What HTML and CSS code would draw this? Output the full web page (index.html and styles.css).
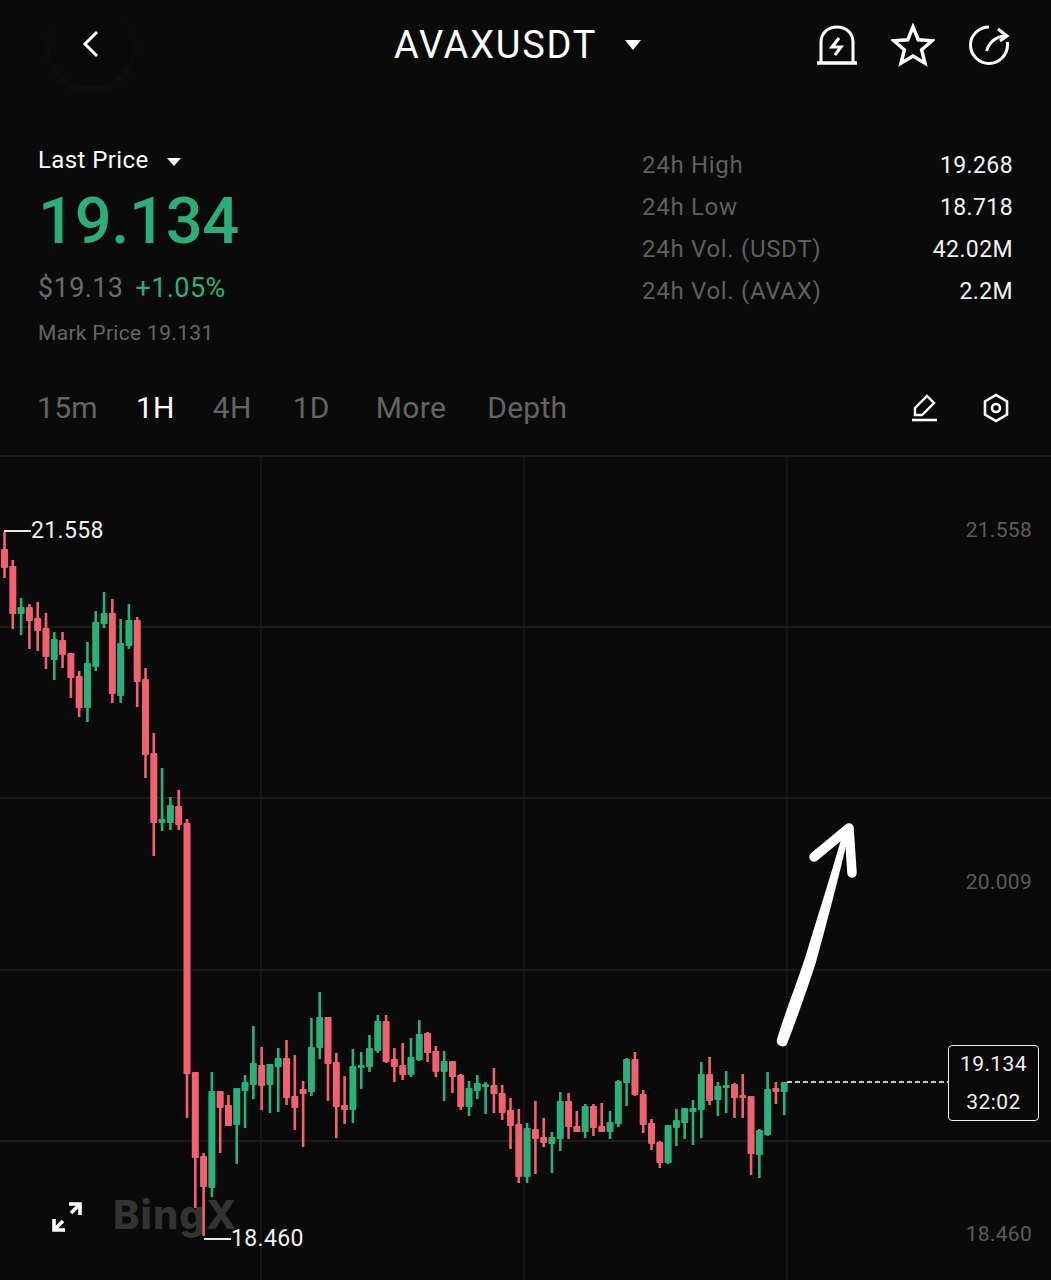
FILE: index.html
```html
<!DOCTYPE html>
<html lang="en">
<head>
  <meta charset="UTF-8" />
  <meta name="viewport" content="width=device-width, initial-scale=1.0"/>
  <title>AVAXUSDT</title>
  <link rel="stylesheet" href="styles.css">
</head>
<body>

<header class="top-bar">
  <div class="back-cell">
    <button class="back-btn" aria-label="Back">
      <svg width="20" height="28" viewBox="0 0 20 28"><path d="M16 2 L4 14 L16 26" class="line" stroke-width="3"/></svg>
    </button>
  </div>
  <div class="pair">
    <span class="pair-name">AVAXUSDT</span>
    <span class="caret caret-big"></span>
  </div>
  <div class="top-icons">
    <!-- alert -->
    <svg width="42" height="42" viewBox="0 0 42 42">
      <path d="M5 38 V18 C5 9 12 3 21 3 C30 3 37 9 37 18 V38" class="line" stroke-width="3"/>
      <path d="M1 39 H41" class="line" stroke-width="3.4"/>
      <path d="M23 14 L16 23 H25 L19 31" class="line" stroke-width="3"/>
    </svg>
    <!-- favourite -->
    <svg width="44" height="44" viewBox="0 0 46 46">
      <path d="M23 4 L28.5 17.5 L43 18.5 L32 28 L35.5 42 L23 34.500 L10.5 42 L14 28 L3 18.5 L17.500 17.500 Z" class="line" stroke-width="3.6"/>
    </svg>
    <!-- share -->
    <svg width="42" height="42" viewBox="0 0 42 42">
      <path d="M21 3 C11 3 2.500 11 2.500 21 C2.500 31 11 39.500 21 39.500 C31 39.500 39.500 31 39.500 21 V18" class="line" stroke-width="3"/>
      <path d="M18.500 27 C21 19 27 13 37 12" class="line" stroke-width="3"/>
      <path d="M30 5 L39 12 L32 17" class="line" stroke-width="3"/>
    </svg>
  </div>
</header>

<section class="summary">
  <div class="price-col">
    <div class="price-type">Last Price <span class="caret"></span></div>
    <div class="last-price">19.134</div>
    <div class="price-sub"><span class="usd">$19.13</span> <span class="pct">+1.05%</span></div>
    <div class="mark-price">Mark Price 19.131</div>
  </div>
  <div class="stats">
    <div class="stat"><span>24h High</span><b>19.268</b></div>
    <div class="stat"><span>24h Low</span><b>18.718</b></div>
    <div class="stat"><span>24h Vol. (USDT)</span><b>42.02M</b></div>
    <div class="stat"><span>24h Vol. (AVAX)</span><b>2.2M</b></div>
  </div>
</section>

<nav class="tabs">
  <a>15m</a>
  <a class="active">1H</a>
  <a>4H</a>
  <a class="tab-1d">1D</a>
  <a class="tab-more">More</a>
  <a>Depth</a>
  <div class="tab-icons">
    <svg width="28" height="30" viewBox="0 0 28 30">
      <path d="M4 22 V15 L16 3 L23 10 L11 22 Z" class="line" stroke-width="2.400"/>
      <path d="M1 27 H26" class="line" stroke-width="2.600"/>
    </svg>
    <svg width="26" height="30" viewBox="0 0 26 30">
      <path d="M13 2 L24 8.500 V21.500 L13 28 L2 21.500 V8.500 Z" class="line" stroke-width="2.600"/>
      <circle cx="13" cy="15" r="4" class="line" stroke-width="2.600"/>
    </svg>
  </div>
</nav>

<main class="chart">
  <div class="watermark">BingX</div>
  <svg id="candles" class="chart-svg" width="1051" height="824" viewBox="0 456 1051 824"></svg>

  <svg class="expand" width="32" height="32" viewBox="0 0 32 32">
    <path d="M3 29 L12 20 M3 18 V29 H14 M29 3 L20 12 M18 3 H29 V14" class="line" stroke-width="3.600"/>
  </svg>

  <div class="hl-label hl-high">21.558</div>
  <div class="hl-label hl-low">18.460</div>

  <div class="axis-label axis-1">21.558</div>
  <div class="axis-label axis-2">20.009</div>
  <div class="axis-label axis-3">18.460</div>

  <div class="now-line"></div>
  <div class="now-box">
    <span>19.134</span>
    <span>32:02</span>
  </div>
</main>

<script src="chart.js"></script>
</body>
</html>
```

FILE: styles.css
```css
body {
  margin: 0;
  width: 1051px;
  height: 1280px;
  overflow: hidden;
  font-family: 'Roboto', sans-serif;
  background: #0a0a0b;
  color: #fff;
}

.line {
  fill: none;
  stroke: #fff;
}

.caret {
  display: inline-block;
  width: 0;
  height: 0;
  margin-left: 12px;
  vertical-align: 2px;
  border-left: 7px solid transparent;
  border-right: 7px solid transparent;
  border-top: 8px solid #fff;
}

.caret-big {
  margin-left: 24px;
  vertical-align: 8px;
  border-left-width: 8px;
  border-right-width: 8px;
  border-top-width: 10px;
}

/* top bar */
.top-bar {
  display: grid;
  grid-template-columns: 394px auto 1fr;
  align-items: center;
  height: 90px;
}

.back-cell {
  padding-left: 49px;
}

.back-btn {
  display: flex;
  align-items: center;
  justify-content: center;
  width: 84px;
  height: 84px;
  padding: 0 0 2px;
  border: none;
  border-radius: 50%;
  background: #0a0a0b;
  box-shadow: 0 4px 14px rgba(255, 255, 255, 0.04);
}

.pair-name {
  font-size: 38px;
  letter-spacing: 1.8px;
}

.top-icons {
  display: flex;
  align-items: center;
  justify-content: flex-end;
  gap: 33px;
  padding-right: 41px;
}

/* price + stats */
.summary {
  display: flex;
  justify-content: space-between;
  height: 285px;
  padding: 54px 38px 0;
  box-sizing: border-box;
}

.price-type {
  font-size: 24px;
  line-height: 32px;
  letter-spacing: 0.4px;
}

.last-price {
  margin-top: 9px;
  font-size: 65px;
  line-height: 72px;
  font-weight: 500;
  letter-spacing: -0.3px;
  color: #2aaf7a;
}

.price-sub {
  margin-top: 14px;
  font-size: 27px;
  line-height: 34px;
  letter-spacing: 0.4px;
}

.usd {
  color: #6a6a6a;
  margin-right: 5px;
}

.pct {
  color: #2aaf7a;
}

.mark-price {
  margin-top: 14px;
  font-size: 21px;
  line-height: 28px;
  letter-spacing: 0.32px;
  color: #666;
}

.stats {
  width: 371px;
}

.stat {
  display: flex;
  justify-content: space-between;
  align-items: center;
  height: 42px;
  font-size: 24px;
  letter-spacing: 0.7px;
}

.stat span {
  color: #5f5f5f;
}

.stat b {
  font-size: 23px;
  letter-spacing: 0.4px;
  font-weight: 400;
  color: #f2f2f2;
}

/* interval tabs */
.tabs {
  display: flex;
  align-items: center;
  gap: 38px;
  height: 81px;
  padding: 0 42px 15px 37px;
  box-sizing: border-box;
  border-bottom: 1px solid #1a1a1b;
  font-size: 30px;
  letter-spacing: 0.3px;
  color: #646464;
}

.tabs .active {
  color: #fff;
}

.tab-1d {
  margin-left: 3px;
}

.tab-more {
  margin-left: 8px;
}

.tabs a:last-of-type {
  margin-left: 3px;
}

.tab-icons {
  display: flex;
  align-items: center;
  gap: 44px;
  margin-left: auto;
}

/* chart */
.chart {
  position: relative;
  height: 824px;
  overflow: hidden;
}

.chart-svg {
  position: relative;
  display: block;
}

.watermark {
  position: absolute;
  left: 113px;
  top: 735px;
  font-family: 'Inter', sans-serif;
  font-size: 40px;
  line-height: 48px;
  font-weight: 800;
  letter-spacing: 1px;
  color: #333;
}

.expand {
  position: absolute;
  left: 51px;
  top: 745px;
}

.hl-label {
  position: absolute;
  font-size: 23px;
  line-height: 30px;
  letter-spacing: 0.35px;
  color: #f0f0f0;
}

.hl-label::before {
  content: "";
  position: absolute;
  top: 14px;
  left: -27px;
  width: 27px;
  height: 1.5px;
  background: #e8e8e8;
}

.hl-high {
  left: 31px;
  top: 60px;
}

.hl-low {
  left: 231px;
  top: 768px;
}

.axis-label {
  position: absolute;
  right: 19px;
  font-size: 21px;
  line-height: 28px;
  letter-spacing: 0.3px;
  color: #5c5c5c;
}

.axis-1 { top: 60px; }
.axis-2 { top: 412px; }
.axis-3 { top: 764px; }

.now-line {
  position: absolute;
  left: 787px;
  top: 625px;
  width: 161px;
  height: 2px;
  background: repeating-linear-gradient(90deg, #c8c8c8 0 5px, transparent 5px 8px);
}

.now-box {
  position: absolute;
  left: 948px;
  top: 589px;
  display: flex;
  flex-direction: column;
  align-items: center;
  justify-content: center;
  gap: 10px;
  width: 91px;
  height: 76px;
  box-sizing: border-box;
  border: 1px solid #eee;
  border-radius: 4px;
  background: #0a0a0b;
  font-size: 21px;
  line-height: 28px;
  letter-spacing: 0.4px;
  color: #f0f0f0;
}
```

FILE: chart.js
```js
// [color, wickTop, bodyTop, bodyBottom, wickBottom] in page pixels
const candles = [
  ['r',532,549,568,578],['r',560,566,614,629],['g',598,607,614,635],['r',604,607,621,649],
  ['r',602,618,631,651],['r',613,628,657,669],['g',632,639,660,680],['r',632,640,655,668],
  ['r',653,653,678,698],['r',671,676,708,717],['g',642,663,708,722],['g',611,622,667,671],
  ['g',592,613,624,628],['r',599,613,694,703],['g',619,643,696,703],['g',604,620,646,649],
  ['r',617,620,682,707],['r',668,679,755,778],['r',733,753,823,856],['g',768,819,823,831],
  ['g',797,805,823,830],['r',790,806,825,830],['r',819,823,1074,1118],['r',1072,1072,1158,1208],
  ['r',1153,1156,1187,1236],['g',1072,1091,1188,1197],['r',1091,1091,1108,1153],['r',1095,1105,1126,1126],
  ['g',1088,1088,1125,1164],['g',1075,1082,1091,1128],['g',1026,1063,1085,1099],['r',1047,1065,1086,1110],
  ['g',1064,1064,1085,1113],['g',1048,1058,1067,1112],['r',1040,1058,1098,1105],['r',1055,1096,1108,1130],
  ['r',1081,1089,1094,1147],['g',1018,1047,1092,1096],['g',992,1017,1048,1059],['r',1017,1017,1064,1101],
  ['r',1053,1062,1107,1138],['r',1076,1105,1110,1124],['g',1049,1066,1110,1123],['g',1052,1065,1068,1089],
  ['g',1035,1048,1067,1072],['g',1015,1021,1051,1053],['r',1015,1021,1062,1063],['r',1048,1059,1067,1082],
  ['r',1043,1065,1075,1080],['g',1038,1057,1075,1077],['g',1020,1034,1060,1061],['r',1032,1033,1053,1062],
  ['r',1046,1051,1072,1077],['g',1051,1061,1072,1101],['r',1061,1061,1077,1093],['r',1074,1075,1107,1110],
  ['g',1081,1088,1107,1116],['g',1075,1083,1091,1099],['g',1082,1084,1087,1114],['r',1068,1085,1094,1113],
  ['r',1085,1093,1113,1120],['r',1098,1110,1126,1149],['r',1109,1124,1177,1183],['g',1123,1128,1177,1183],
  ['r',1101,1129,1139,1174],['r',1118,1137,1143,1147],['g',1132,1137,1144,1173],['g',1092,1101,1139,1151],
  ['r',1093,1101,1127,1139],['r',1111,1126,1132,1132],['g',1104,1106,1132,1138],['r',1104,1106,1128,1136],
  ['r',1103,1126,1132,1132],['g',1111,1122,1132,1139],['g',1080,1081,1124,1127],['g',1058,1059,1083,1106],
  ['r',1052,1059,1095,1096],['r',1090,1094,1125,1133],['r',1119,1123,1144,1150],['r',1141,1142,1163,1168],
  ['g',1125,1125,1163,1164],['g',1109,1120,1128,1146],['g',1108,1108,1123,1139],['g',1100,1108,1112,1145],
  ['g',1062,1074,1110,1138],['r',1057,1074,1101,1105],['g',1082,1086,1100,1116],['g',1071,1085,1088,1113],
  ['r',1083,1084,1098,1118],['r',1074,1095,1098,1118],['r',1096,1096,1154,1175],['g',1129,1130,1155,1178],
  ['g',1072,1089,1135,1136],['r',1082,1088,1092,1104],['g',1082,1082,1092,1115]
];

const colors = { r: '#f0626f', g: '#2bb07c' };
const parts = [];

// grid first, candles go over it
[456, 627, 798, 970, 1141].forEach(y => {
  parts.push(`<rect x="0" y="${y - 1}" width="1051" height="2" fill="#1a1a1b"/>`);
});
[261, 524, 787].forEach(x => {
  parts.push(`<rect x="${x - 1}" y="456" width="1.6" height="824" fill="#171718"/>`);
});

candles.forEach((c, i) => {
  const x = 4.5 + 8.295 * i;
  const fill = colors[c[0]];
  parts.push(`<rect x="${x - 1.3}" y="${c[1]}" width="2.6" height="${c[4] - c[1]}" fill="${fill}"/>`);
  parts.push(`<rect x="${x - 3.5}" y="${c[2]}" width="7" height="${c[3] - c[2]}" rx="1" fill="${fill}"/>`);
});

// the hand drawn arrow, thinner towards the tip
parts.push('<path d="M777 1039 C786 1010 796 985 805 958 C818 915 830 878 842 836 L848 838 C838 880 827 922 816 962 C807 990 797 1018 787 1044 C785 1049 775 1046 777 1039 Z" fill="#fff"/>');
parts.push('<path d="M814 857 L849 828 L852 873" fill="none" stroke="#fff" stroke-width="9.5" stroke-linecap="round" stroke-linejoin="round"/>');

document.getElementById('candles').innerHTML = parts.join('');
```
